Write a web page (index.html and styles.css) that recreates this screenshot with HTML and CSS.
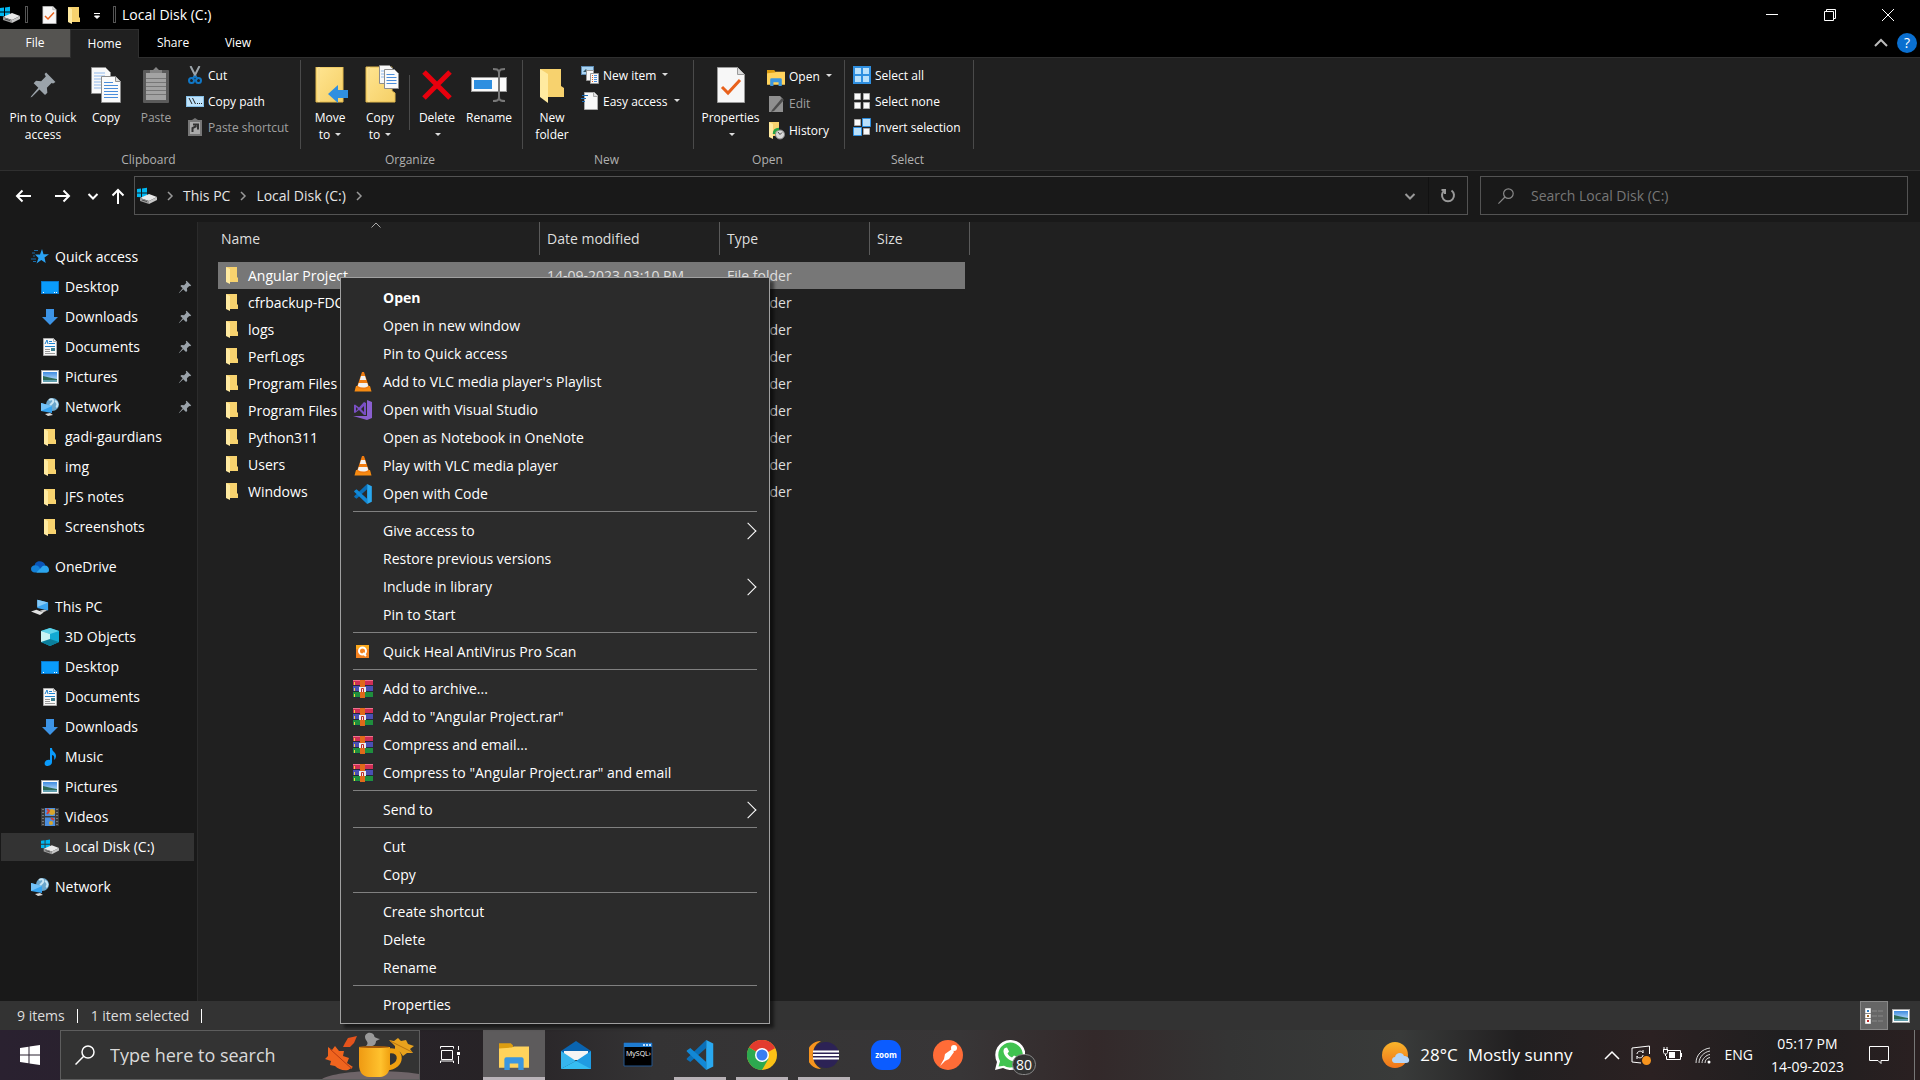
FILE: index.html
```html
<!DOCTYPE html>
<html lang="en">
<head>
    <meta charset="utf-8">
    <title>Local Disk (C:)</title>
    <link rel="stylesheet" href="styles.css">
</head>
<body>
    <!-- icon sprite -->
    <svg class="sprite" aria-hidden="true">
        <defs>
            <linearGradient id="gFolder" x1="0" y1="0" x2="1" y2="1">
                <stop offset="0" stop-color="#ffe591"/><stop offset="1" stop-color="#f5cf66"/>
            </linearGradient>
            <linearGradient id="gCup" x1="0" y1="0" x2="1" y2="0">
                <stop offset="0" stop-color="#ef9a12"/><stop offset=".7" stop-color="#ffc22e"/><stop offset="1" stop-color="#f0a010"/>
            </linearGradient>
            <linearGradient id="gSun" x1="0" y1="0" x2="0" y2="1">
                <stop offset="0" stop-color="#f9b52b"/><stop offset="1" stop-color="#f0741a"/>
            </linearGradient>
            <linearGradient id="gSky" x1="0" y1="0" x2="0" y2="1">
                <stop offset="0" stop-color="#3f8be0"/><stop offset="1" stop-color="#d5efff"/>
            </linearGradient>
        </defs>
        <symbol id="folder" viewBox="0 0 18 18">
            <path d="M3 1h11v10l1 1v4H6z" fill="#f7d26e"/>
            <path d="M3 1l4 2v15l-4-2z" fill="#ffeaa0"/>
        </symbol>
        <symbol id="disk" viewBox="0 0 20 18">
            <path d="M0 2l4-.5v4H0zM5 1.400l5-.6v4.700H5zM0 6.500h4v3.800L0 10zM5 6.500h5v4.400l-5-.4z" fill="#00b7f1"/>
            <path d="M3 11l9-4 8 3-8 4z" fill="#e9e9e9"/>
            <path d="M3 11l9 3v3l-9-3z" fill="#9b9b9b"/>
            <path d="M12 14l8-4v3l-8 4z" fill="#c6c6c6"/>
            <path d="M5 13l5 1.500" stroke="#4b4b4b"/>
        </symbol>
        <symbol id="check" viewBox="0 0 28 36">
            <path d="M.5.500h20l7 7v28H.5z" fill="#f7f7f7" stroke="#9a9a9a"/>
            <path d="M20.500.500v7h7" fill="#dcdcdc" stroke="#9a9a9a"/>
            <path d="M5 20l6 6L23 13" fill="none" stroke="#e8611c" stroke-width="3"/>
        </symbol>
        <symbol id="pin" viewBox="0 0 18 18">
            <path d="M11 1l6 6-1.500 1-1-.3-3 3 .3 3.300-1.500 1.500-3.600-3.600L2 16.500l-1 .5.500-1L6 10.700 3 7.800 4.500 6.300l3.300.3 3-3L10 2z" fill="#9ba3aa"/>
        </symbol>
        <symbol id="copy" viewBox="0 0 30 36">
            <path d="M.5.500h14l5 5v21H.5z" fill="#f8f8f8" stroke="#8d8d8d"/>
            <path d="M3 6h11M3 9h11M3 12h10M3 15h10M3 18h10M3 21h10" stroke="#8fb8ec"/>
            <path d="M10.500 9.500h14l5 5v21h-19z" fill="#fafafa" stroke="#8d8d8d"/>
            <path d="M24.500 9.500v5h5" fill="#ddd" stroke="#8d8d8d"/>
            <path d="M13 15.500h9M13 18.500h14M13 21.500h14M13 24.500h14M13 27.500h14M13 30.500h14" stroke="#4a8ddb"/>
        </symbol>
        <symbol id="paste" viewBox="0 0 26 36">
            <rect y="3" width="26" height="33" rx="1" fill="#5a5a5a"/>
            <rect x="3" y="6" width="20" height="27" fill="#a3a3a3"/>
            <path d="M7 6V3h3l3-3 3 3h3v3z" fill="#858585"/>
            <path d="M3 11.500h20M3 15.500h20M3 19.500h20M3 23.500h20M3 27.500h20" stroke="#777"/>
        </symbol>
        <symbol id="cut" viewBox="0 0 18 18">
            <path d="M4.500 0l5.500 11M13.500 0L8 11" stroke="#9da5ab" stroke-width="2"/>
            <path d="M9 10l-3 3M9 10l3 3" stroke="#1177c5" stroke-width="2"/>
            <circle cx="5.500" cy="14.500" r="2.500" fill="none" stroke="#1177c5" stroke-width="2"/>
            <circle cx="12.500" cy="14.500" r="2.500" fill="none" stroke="#1177c5" stroke-width="2"/>
        </symbol>
        <symbol id="path" viewBox="0 0 18 18">
            <rect x=".5" y="4.500" width="17" height="10" fill="#bfe3fb" stroke="#86bfe6"/>
            <path d="M3 6l3 6M6.500 6l3 6M11 11.500h1M13 11.500h1M15 11.500h1" stroke="#222"/>
        </symbol>
        <symbol id="shortcut" viewBox="0 0 18 18">
            <path d="M2 2h4l3-2 3 2h4v16H2z" fill="#777"/>
            <rect x="4" y="4" width="10" height="12" fill="#aaa"/>
            <path d="M6.500 14v-4l4-2M7 6.500h5v5" fill="none" stroke="#333" stroke-width="2"/>
        </symbol>
        <symbol id="moveto" viewBox="-2 0 36 36">
            <path d="M2 0h27v35H2z" fill="url(#gFolder)" stroke="#e2b94f"/>
            <path d="M5 0v35" stroke="#f6dc8d" stroke-width="2"/>
            <path d="M14 27l10-9v5h10v8H24v5z" fill="#2f8fe0"/>
        </symbol>
        <symbol id="copyto" viewBox="-3 2 36 36" overflow="visible">
            <path d="M1 2h26v24l3 2v9H1z" fill="url(#gFolder)" stroke="#e2b94f"/>
            <path d="M4 2v35" stroke="#f6dc8d" stroke-width="2"/>
            <path d="M14.500.500h10l4 4v14h-14z" fill="#f8f8f8" stroke="#8d8d8d"/>
            <path d="M16 6h8M16 9h8M16 12h8" stroke="#8fb8ec"/>
            <path d="M19.500 4.500h10l4 4v15h-14z" fill="#fafafa" stroke="#8d8d8d"/>
            <path d="M21.500 9.500h8M21.500 12.500h10M21.500 15.500h10M21.500 18.500h10" stroke="#4a8ddb"/>
        </symbol>
        <symbol id="delete" viewBox="0 0 36 36">
            <path d="M5 5l26 26M31 5L5 31" stroke="#e8000d" stroke-width="5"/>
        </symbol>
        <symbol id="rename" viewBox="0 0 36 36">
            <rect x=".5" y="10.500" width="35" height="14" fill="#fafafa" stroke="#999"/>
            <rect x="3" y="13" width="18" height="9" fill="#2f8fe0"/>
            <path d="M22 2c3 0 6 0 6 4v24c0 4-3 4-6 4M34 2c-3 0-6 0-6 4v24c0 4 3 4 6 4" fill="none" stroke="#777" stroke-width="2"/>
        </symbol>
        <symbol id="newfolder" viewBox="0 0 26 36">
            <path d="M1 2h21v17l3 2v9H6z" fill="#f7d26e"/>
            <path d="M1 2l8 5v29l-8-6z" fill="#ffeaa0"/>
        </symbol>
        <symbol id="newitem" viewBox="0 0 18 18">
            <rect x=".5" y=".5" width="12" height="8" fill="#a9d4f3" stroke="#5f8cb4"/>
            <path d="M2 6l3-3 2 3z" fill="#356"/>
            <path d="M5.500 4.500h7v10h-7z" fill="#f8f8f8" stroke="#999"/>
            <path d="M9.500 7.500h8v10h-8z" fill="#f8f8f8" stroke="#999"/>
            <path d="M13 9.500h3M13 11.500h3M13 13.500h3M13 15.500h3" stroke="#4a8ddb"/>
            <path d="M11 9.500h1M11 11.500h1M11 13.500h1M11 15.500h1" stroke="#e8611c"/>
        </symbol>
        <symbol id="easy" viewBox="0 0 18 18">
            <path d="M3.500.500h10l3 3v14h-13z" fill="#f8f8f8" stroke="#aaa"/>
            <path d="M12.500.500v4h4" fill="#ddd" stroke="#aaa"/>
            <path d="M1 3.500h6M0 6.500h5M1 9.500h3" stroke="#1a6bb5"/>
        </symbol>
        <symbol id="explorer" viewBox="0 0 28 28">
            <path d="M0 3h11l2 2v4H0z" fill="#dc9d10"/>
            <path d="M0 8l12-1 2-1h14v20H0z" fill="#ffd35c"/>
            <path d="M5 28V18a2 2 0 0 1 2-2h14a2 2 0 0 1 2 2v10h-5v-6h-8v6z" fill="#3a96e0"/>
        </symbol>
        <symbol id="edit" viewBox="0 0 18 18">
            <path d="M2 1h11l3 3v13H2z" fill="#8f8f8f"/>
            <path d="M5 15L15 3l2 2L7 16l-3 1z" fill="#4d4d4d"/>
        </symbol>
        <symbol id="history" viewBox="0 0 18 18">
            <path d="M2 0h10v14H5z" fill="#f7d26e"/>
            <path d="M2 0l4 2v15l-4-2z" fill="#ffeaa0"/>
            <circle cx="13" cy="12.500" r="4.500" fill="#d9d9d9" stroke="#888"/>
            <path d="M11 10l2 2.500 2-2" fill="none" stroke="#444"/>
            <path d="M12 7c-4 0-5 3-5 5" fill="none" stroke="#27a346" stroke-width="2.500"/>
        </symbol>
        <symbol id="selall" viewBox="0 0 18 18">
            <path d="M0 0h18v18H0z" fill="#2f8fe0"/>
            <path d="M2 2h6v6H2zM10 2h6v6h-6zM2 10h6v6H2zM10 10h6v6h-6z" fill="#b9e0fb"/>
        </symbol>
        <symbol id="selnone" viewBox="0 0 18 18">
            <path d="M1.500 1.500h6v6h-6zM10.500 1.500h6v6h-6zM1.500 10.500h6v6h-6zM10.500 10.500h6v6h-6z" fill="#fafafa" stroke="#aaa"/>
        </symbol>
        <symbol id="selinv" viewBox="0 0 18 18">
            <path d="M1.500 1.500h6v6h-6zM10.500 10.500h6v6h-6z" fill="#fafafa" stroke="#aaa"/>
            <path d="M9.500.500h8v8h-8zM.5 9.500h8v8h-8z" fill="#b9e0fb" stroke="#2f8fe0"/>
        </symbol>
        <symbol id="star" viewBox="0 0 18 18">
            <path d="M11 1l1.500 5.200H18l-4.500 3.300 1.200 5.500-4.400-3L5.500 15.500l2-5.500L4 6.500h5z" fill="#2aa3f4"/>
            <path d="M3 2.500h4M1 5h3M2 8h2M0 11h5M2 13.500h3" stroke="#1a6ba8"/>
        </symbol>
        <symbol id="desktop" viewBox="0 0 18 18">
            <rect x=".5" y="3.500" width="17" height="12" fill="#0a9bfb" stroke="#0b76c8"/>
            <path d="M2 14.500h1M13 14.500h1M15 14.500h1" stroke="#fff"/>
        </symbol>
        <symbol id="down" viewBox="0 0 18 18">
            <path d="M5 1h8v8h4l-8 8-8-8h4z" fill="#3d94e6"/>
        </symbol>
        <symbol id="doc" viewBox="0 0 18 18">
            <path d="M2.500.500h10l3 3v14h-13z" fill="#f8f8f8" stroke="#aaa"/>
            <path d="M12.500.500v3h3" fill="none" stroke="#aaa"/>
            <path d="M4 6l2-4 1 4M8 3.500h3M8 5.500h6M4 8.500h10" stroke="#1c82cf" fill="none"/>
            <path d="M4 11.500h5M4 13.500h5M4 15.500h10" stroke="#999"/>
            <path d="M10 10h4v3h-4z" fill="#3b7f8f"/>
        </symbol>
        <symbol id="pic" viewBox="0 0 18 18">
            <rect x=".5" y="2.500" width="17" height="13" fill="#fff" stroke="#a3a3a3"/>
            <rect x="2" y="4" width="14" height="10" fill="url(#gSky)"/>
            <path d="M2 8c4 1 8 2 14 3v1H2z" fill="#2f6b57"/>
            <path d="M2 12h14v2H2z" fill="#5f9fae"/>
        </symbol>
        <symbol id="net" viewBox="0 0 18 18">
            <circle cx="11.500" cy="6.500" r="6.500" fill="#6ba6cc"/>
            <path d="M8 2c3-2 5 0 4 2S8 7 8 10M14 3c3 1 3 5 1 6" fill="none" stroke="#c9e6f5" stroke-width="2"/>
            <path d="M0 5l11 3v7L0 13z" fill="#35a3f0"/>
            <path d="M0 5l11 3-11 5z" fill="#73c2f8"/>
            <path d="M4 16l5-1 3 2-5 1z" fill="#d8d8d8"/>
        </symbol>
        <symbol id="cloud" viewBox="0 0 20 18">
            <path d="M4 8c0-7 10-7 12-1l-5 4z" fill="#0a55b8"/>
            <path d="M0 11c0-4 5-5 8-3l5 6-9 1c-2 0-4-1-4-4z" fill="#1481d8"/>
            <path d="M6 15l7-7c3-2 7 0 7 4 0 3-2 3.500-4 3.500H4z" fill="#2ba5ee"/>
        </symbol>
        <symbol id="pc" viewBox="0 0 20 18">
            <path d="M7 1l12 3v9L7 10z" fill="#3aa5f2"/>
            <path d="M7 1l12 3-12 5z" fill="#84caf8"/>
            <path d="M10 13l5-1 3 1-5 2z" fill="#ccc"/>
            <path d="M0 14l6-2 8 3-4 3z" fill="#e2e2e2"/>
        </symbol>
        <symbol id="cube" viewBox="0 0 18 18">
            <path d="M0 3l9-3 9 3v11l-9 4-9-4z" fill="#12a9d2"/>
            <path d="M0 3l9-3 9 3-9 3z" fill="#5fd2e8"/>
            <path d="M0 3l9 3v8l-9 0z" fill="#c8f3f3"/>
            <path d="M0 14l9-3 9 3-9 4z" fill="#0b7f9c"/>
        </symbol>
        <symbol id="music" viewBox="0 0 18 18">
            <path d="M9 0h2c0 4 4 4 4 8 0 2-1 3-2 4 1-4-1-5-2-5v7c0 3-3 4-5 4s-3-2-2-4 3-2.500 5-2z" fill="#0a9bfb"/>
        </symbol>
        <symbol id="video" viewBox="0 0 18 18">
            <path d="M0 0h18v18H0z" fill="#3a3a3a"/>
            <path d="M4 0h10v8H4zM4 9.500h10V18H4z" fill="#4c8fe0"/>
            <circle cx="11" cy="4" r="3" fill="#d8a62c"/><circle cx="10" cy="15" r="2" fill="#d8a62c"/>
            <path d="M6 1l2 2-2 3M10 10l3 2" stroke="#d33f33" stroke-width="2" fill="none"/>
            <path d="M2 1v16M16 1v16" stroke="#777" stroke-width="2" stroke-dasharray="1 2"/>
        </symbol>
        <symbol id="vlc" viewBox="0 0 20 20">
            <path d="M3 14h14l1.500 5.500h-17z" fill="#f68b12"/>
            <path d="M9 0h2l5 15c-3 3-9 3-12 0z" fill="#f07c10"/>
            <path d="M8 4h4l1.200 4H6.800zM5.700 11h8.600l1 3c-3 2-7 2-10.600 0z" fill="#f2f2f2"/>
        </symbol>
        <symbol id="vs" viewBox="0 0 20 20">
            <path d="M14 0l5 2v16l-5 2-14-4 14 0z" fill="#8a5fcf"/>
            <path d="M1 5l1-.5 4 3L11 2l2 1v12l-2 0-5-5-4 3-1-.5zM3 7v4l2-2zM11 6L8 9l3 3z" fill="#7a4fc4" fill-rule="evenodd"/>
        </symbol>
        <symbol id="vscode" viewBox="0 0 30 34">
            <path d="M22 0l8 4v26l-8 4z" fill="#29a8f0"/>
            <path d="M22 0v9L4 25l-4-3v-1z" fill="#0a6fb8"/>
            <path d="M22 34v-9L4 9 0 12v1z" fill="#1288d6"/>
        </symbol>
        <symbol id="quickheal" viewBox="0 0 20 20">
            <path d="M3 3h13v13H3z" fill="#f58220"/>
            <path d="M3 3h13v4H3z" fill="#fba81c"/>
            <circle cx="9.500" cy="9" r="3.500" fill="none" stroke="#fff" stroke-width="2"/>
            <path d="M10 11l3 3" stroke="#fff" stroke-width="2"/>
        </symbol>
        <symbol id="rar" viewBox="0 0 20 20">
            <path d="M0 1h20v6H0z" fill="#cf2e55"/>
            <path d="M0 7h20v6H0z" fill="#4a4fb4"/>
            <path d="M0 13h20v6H0z" fill="#1f8f3d"/>
            <path d="M0 1.500h20" stroke="#f0728c"/>
            <path d="M0 6.500h20M0 12.500h20M0 18.500h20" stroke="#232a3a"/>
            <path d="M7 1h5v18H7z" fill="#e06a1a"/>
            <path d="M1.500 3v3M1.500 9v3M1.500 15v3" stroke="#f3cf3c"/>
            <path d="M6 8h7v5H6z" fill="#ececec"/>
            <path d="M8.500 13V9.500h2V13" fill="none" stroke="#c02b2b"/>
        </symbol>
        <symbol id="win" viewBox="0 0 20 20">
            <path d="M0 3l8.500-1.200v7.700H0zM9.500 1.600L20 0v9.500H9.500zM0 10.500h8.500v7.700L0 17zM9.500 10.500H20V20L9.500 18.400z" fill="#fff"/>
        </symbol>
        <symbol id="lens" viewBox="0 0 20 20">
            <circle cx="13" cy="7" r="6" fill="none" stroke="currentColor" stroke-width="1.500"/>
            <path d="M8.700 11.300L.5 19.500" stroke="currentColor" stroke-width="1.500"/>
        </symbol>
        <symbol id="chev" viewBox="0 0 10 10">
            <path d="M3 1l4 4-4 4" fill="none" stroke="currentColor" stroke-width="1.500"/>
        </symbol>
        <symbol id="chevdown" viewBox="0 0 12 12">
            <path d="M1.500 4L6 8.500 10.500 4" fill="none" stroke="currentColor" stroke-width="2"/>
        </symbol>
    </svg>

    <header class="titlebar">
        <svg class="disk"><use href="#disk"/></svg>
        <span class="bar"></span>
        <svg class="qa-check"><use href="#check"/></svg>
        <svg class="ico"><use href="#folder"/></svg>
        <svg class="qa-more" viewBox="0 0 8 8"><path d="M1 1.500h6M1.500 4h5L4 6.500z" fill="#fff" stroke="#fff"/></svg>
        <span class="bar"></span>
        <h1>Local Disk (C:)</h1>
        <div class="win-buttons">
            <button aria-label="Minimize"><svg viewBox="0 0 12 12"><path d="M0 5.500h12" stroke="#fff"/></svg></button>
            <button aria-label="Restore"><svg viewBox="0 0 12 12"><path d="M.5 2.500h9v9h-9zM2.500 2V.5h9v9H10" fill="none" stroke="#fff"/></svg></button>
            <button aria-label="Close"><svg viewBox="0 0 12 12"><path d="M0 0l12 12M12 0L0 12" stroke="#fff"/></svg></button>
        </div>
    </header>

    <nav class="tabs">
        <button class="tab file">File</button>
        <button class="tab active">Home</button>
        <button class="tab">Share</button>
        <button class="tab">View</button>
        <button class="collapse" aria-label="Collapse ribbon"><svg viewBox="0 0 14 14"><path d="M1 10l6-6 6 6" fill="none" stroke="#bbb" stroke-width="2"/></svg></button>
        <button class="help" aria-label="Help">?</button>
    </nav>

    <section class="ribbon">
        <div class="group clipboard">
            <div class="group-body">
                <button class="big"><svg><use href="#pin"/></svg>Pin to Quick<br>access</button>
                <button class="big"><svg><use href="#copy"/></svg>Copy</button>
                <button class="big off"><svg><use href="#paste"/></svg>Paste</button>
                <div class="small-col">
                    <button class="small"><svg><use href="#cut"/></svg>Cut</button>
                    <button class="small"><svg><use href="#path"/></svg>Copy path</button>
                    <button class="small off"><svg><use href="#shortcut"/></svg>Paste shortcut</button>
                </div>
            </div>
            <div class="group-name">Clipboard</div>
        </div>
        <div class="group organize">
            <div class="group-body">
                <button class="big"><svg><use href="#moveto"/></svg>Move<br>to <i class="caret"></i></button>
                <button class="big"><svg><use href="#copyto"/></svg>Copy<br>to <i class="caret"></i></button>
                <span class="divider"></span>
                <button class="big"><svg><use href="#delete"/></svg>Delete<br><i class="caret"></i></button>
                <button class="big"><svg><use href="#rename"/></svg>Rename</button>
            </div>
            <div class="group-name">Organize</div>
        </div>
        <div class="group new">
            <div class="group-body">
                <button class="big"><svg><use href="#newfolder"/></svg>New<br>folder</button>
                <div class="small-col">
                    <button class="small"><svg><use href="#newitem"/></svg>New item <i class="caret"></i></button>
                    <button class="small"><svg><use href="#easy"/></svg>Easy access <i class="caret"></i></button>
                </div>
            </div>
            <div class="group-name">New</div>
        </div>
        <div class="group open">
            <div class="group-body">
                <button class="big"><svg><use href="#check"/></svg>Properties<br><i class="caret"></i></button>
                <div class="small-col">
                    <button class="small"><svg><use href="#explorer"/></svg>Open <i class="caret"></i></button>
                    <button class="small off"><svg><use href="#edit"/></svg>Edit</button>
                    <button class="small"><svg><use href="#history"/></svg>History</button>
                </div>
            </div>
            <div class="group-name">Open</div>
        </div>
        <div class="group select">
            <div class="group-body">
                <div class="small-col">
                    <button class="small"><svg><use href="#selall"/></svg>Select all</button>
                    <button class="small"><svg><use href="#selnone"/></svg>Select none</button>
                    <button class="small"><svg><use href="#selinv"/></svg>Invert selection</button>
                </div>
            </div>
            <div class="group-name">Select</div>
        </div>
    </section>

    <div class="addressbar">
        <button class="nav" aria-label="Back"><svg viewBox="0 0 16 16"><path d="M16 8H2M7.500 2.500L2 8l5.500 5.500" fill="none" stroke="#fff" stroke-width="2"/></svg></button>
        <button class="nav" aria-label="Forward"><svg viewBox="0 0 16 16"><path d="M0 8h14M8.500 2.500L14 8l-5.500 5.500" fill="none" stroke="#fff" stroke-width="2"/></svg></button>
        <button class="nav recent" aria-label="Recent locations"><svg><use href="#chevdown"/></svg></button>
        <button class="nav" aria-label="Up"><svg viewBox="0 0 16 16"><path d="M8 16V2M2.500 7.500L8 2l5.500 5.500" fill="none" stroke="#fff" stroke-width="2"/></svg></button>
        <div class="crumbs">
            <svg class="disk"><use href="#disk"/></svg>
            <svg class="sep"><use href="#chev"/></svg>
            <a href="#">This PC</a>
            <svg class="sep"><use href="#chev"/></svg>
            <a href="#">Local Disk (C:)</a>
            <svg class="sep"><use href="#chev"/></svg>
            <button class="history" aria-label="Previous locations"><svg><use href="#chevdown"/></svg></button>
            <button class="refresh" aria-label="Refresh"><svg viewBox="0 0 16 16"><path d="M11.500 2.500a6 6 0 1 1-7 0M1.500 2H5v4" fill="none" stroke="#999" stroke-width="2"/></svg></button>
        </div>
        <label class="search">
            <svg><use href="#lens"/></svg>
            <input type="text" placeholder="Search Local Disk (C:)" aria-label="Search Local Disk (C:)">
        </label>
    </div>

    <main class="explorer">
        <aside class="sidebar">
            <a href="#" class="top"><svg><use href="#star"/></svg>Quick access</a>
            <a href="#"><svg><use href="#desktop"/></svg>Desktop<svg class="pinned"><use href="#pin"/></svg></a>
            <a href="#"><svg><use href="#down"/></svg>Downloads<svg class="pinned"><use href="#pin"/></svg></a>
            <a href="#"><svg><use href="#doc"/></svg>Documents<svg class="pinned"><use href="#pin"/></svg></a>
            <a href="#"><svg><use href="#pic"/></svg>Pictures<svg class="pinned"><use href="#pin"/></svg></a>
            <a href="#"><svg><use href="#net"/></svg>Network<svg class="pinned"><use href="#pin"/></svg></a>
            <a href="#"><svg><use href="#folder"/></svg>gadi-gaurdians</a>
            <a href="#"><svg><use href="#folder"/></svg>img</a>
            <a href="#"><svg><use href="#folder"/></svg>JFS notes</a>
            <a href="#"><svg><use href="#folder"/></svg>Screenshots</a>
            <a href="#" class="top"><svg><use href="#cloud"/></svg>OneDrive</a>
            <a href="#" class="top"><svg><use href="#pc"/></svg>This PC</a>
            <a href="#"><svg><use href="#cube"/></svg>3D Objects</a>
            <a href="#"><svg><use href="#desktop"/></svg>Desktop</a>
            <a href="#"><svg><use href="#doc"/></svg>Documents</a>
            <a href="#"><svg><use href="#down"/></svg>Downloads</a>
            <a href="#"><svg><use href="#music"/></svg>Music</a>
            <a href="#"><svg><use href="#pic"/></svg>Pictures</a>
            <a href="#"><svg><use href="#video"/></svg>Videos</a>
            <a href="#" class="current"><svg><use href="#disk"/></svg>Local Disk (C:)</a>
            <a href="#" class="top"><svg><use href="#net"/></svg>Network</a>
        </aside>

        <div class="files">
            <table>
                <colgroup><col class="c-name"><col class="c-date"><col class="c-type"><col class="c-size"></colgroup>
                <thead>
                    <tr>
                        <th>Name<svg class="sort" viewBox="0 0 10 6"><path d="M.5 5.500L5 1l4.500 4.500" fill="none" stroke="#aaa"/></svg></th>
                        <th>Date modified</th>
                        <th>Type</th>
                        <th>Size</th>
                    </tr>
                </thead>
                <tbody>
                    <tr class="selected"><td><svg><use href="#folder"/></svg>Angular Project</td><td>14-09-2023 03:10 PM</td><td>File folder</td><td></td></tr>
                    <tr><td><svg><use href="#folder"/></svg>cfrbackup-FDC</td><td></td><td>File folder</td><td></td></tr>
                    <tr><td><svg><use href="#folder"/></svg>logs</td><td></td><td>File folder</td><td></td></tr>
                    <tr><td><svg><use href="#folder"/></svg>PerfLogs</td><td></td><td>File folder</td><td></td></tr>
                    <tr><td><svg><use href="#folder"/></svg>Program Files</td><td></td><td>File folder</td><td></td></tr>
                    <tr><td><svg><use href="#folder"/></svg>Program Files (x86)</td><td></td><td>File folder</td><td></td></tr>
                    <tr><td><svg><use href="#folder"/></svg>Python311</td><td></td><td>File folder</td><td></td></tr>
                    <tr><td><svg><use href="#folder"/></svg>Users</td><td></td><td>File folder</td><td></td></tr>
                    <tr><td><svg><use href="#folder"/></svg>Windows</td><td></td><td>File folder</td><td></td></tr>
                </tbody>
            </table>
        </div>
    </main>

    <footer class="statusbar">
        <span>9 items</span>
        <span>1 item selected</span>
        <button class="view on" aria-label="Details view"><svg viewBox="0 0 18 18"><path d="M.5 1.500h5v15h-5z" fill="#fff" stroke="#ddd"/><path d="M2 4h2" stroke="#2d7fc4" stroke-width="2"/><path d="M2 9h2" stroke="#a06a2a" stroke-width="2"/><path d="M2 14h2" stroke="#c02b2b" stroke-width="2"/><path d="M0 6.500h6M0 11.500h6" stroke="#888"/><path d="M7 4h5M13 4h5M7 9h5M13 9h5M7 14h5M13 14h5" stroke="#888"/></svg></button>
        <button class="view" aria-label="Large thumbnails"><svg><use href="#pic"/></svg></button>
    </footer>

    <div class="taskbar">
        <button class="start" aria-label="Start"><svg><use href="#win"/></svg></button>
        <label class="task-search">
            <svg class="lens"><use href="#lens"/></svg>
            <input type="text" placeholder="Type here to search" aria-label="Type here to search">
            <!-- autumn cup -->
            <svg class="cup" viewBox="0 0 100 48">
                <path d="M0 48c12-7 55-11 97-5v5z" fill="#6e6468"/>
                <path d="M6 16l4 3 3-4 4 5 5 0-1 5 6 2-2 5 6 4-5 3c-5 1-10-1-13-4l-5-1 1-4-6-2 3-3z" fill="#f0641e"/>
                <path d="M8 18l22 20" stroke="#b83a10"/>
                <path d="M35 5l-9 2-3 5-2 4 7 0 4-4z" fill="#e5531c"/>
                <path d="M67 9l5 1 4-3 3 3 5-1 2 4 6 2-4 3 3 4-6 0-4 3-3-4-5-1 0-5z" fill="#e8a21d"/>
                <path d="M68 10l22 11" stroke="#b87410"/>
                <path d="M44 15c4-4-1-5-1-9s6-6 9-2c0 3 3 3 6 4l-4 2c0 3-2 5-5 5z" fill="#999"/>
                <path d="M67 20c14-2 14 16-2 17" fill="none" stroke="#f0a010" stroke-width="5"/>
                <path d="M37 16h31v18c0 7-4 12-10 12H47c-6 0-10-5-10-12z" fill="url(#gCup)"/>
                <ellipse cx="52" cy="16" rx="15" ry="1" fill="#a85b08"/>
            </svg>
        </label>
        <button class="app taskview" aria-label="Task view"><svg viewBox="0 0 20 20"><path d="M1.500 5.500h11v9h-11zM.5 3.500V1.500h13v2M.5 18v-2h13v2M18.500 1v4M18.500 11v8" fill="none" stroke="#fff"/><path d="M17 7h3v3h-3z" fill="#fff"/></svg></button>
        <button class="app active" aria-label="File Explorer"><svg><use href="#explorer"/></svg></button>
        <button class="app" aria-label="Mail"><svg viewBox="0 0 30 30"><path d="M0 11L15 1l15 10v5H0z" fill="#0a64b0"/><path d="M3 11h24v9H3z" fill="#f4f4f4"/><path d="M0 11l15 10L0 29z" fill="#36b5ee"/><path d="M30 11v18H0l15-8z" fill="#1f9be2"/><path d="M0 29l15-8 15 8z" fill="#35bdf2"/></svg></button>
        <button class="app" aria-label="MySQL"><svg viewBox="0 0 30 30"><path d="M1 3h28v23H1z" fill="#000" stroke="#24568e"/><path d="M1 3h28v4H1z" fill="#1e7bd0"/><path d="M20 5h2M23 5h2M26 5h2" stroke="#bfe0ff" stroke-width="2"/><text x="3" y="16" class="mysql">MySQL&#8250;</text></svg></button>
        <button class="app running" aria-label="Visual Studio Code"><svg><use href="#vscode"/></svg></button>
        <button class="app running" aria-label="Chrome"><svg viewBox="0 0 30 30"><circle cx="15" cy="15" r="15" fill="#fbc116"/><path d="M15 15L2 7.500a15 15 0 0 1 26 0z" fill="#e33b2e"/><path d="M2 7.500A15 15 0 0 0 15 30l6.500-11.200z" fill="#2da94f"/><path d="M15 8h13.500L21 12z" fill="#e33b2e"/><circle cx="15" cy="15" r="7" fill="#fff"/><circle cx="15" cy="15" r="5.500" fill="#3a7df0"/></svg></button>
        <button class="app running" aria-label="Eclipse"><svg viewBox="0 0 30 30"><path d="M12 1a14 14 0 0 0 0 28A16 16 0 0 1 12 1z" fill="#f7941e"/><circle cx="17" cy="15" r="13" fill="#2c2255"/><path d="M4 11.500h26M4 15h26M4 18.500h26" stroke="#fff" stroke-width="2"/></svg></button>
        <button class="app" aria-label="Zoom"><svg viewBox="0 0 30 30"><rect width="30" height="30" rx="11" fill="#0b5cff"/><text x="15" y="18" class="zoom">zoom</text></svg></button>
        <button class="app" aria-label="Postman"><svg viewBox="0 0 30 30"><circle cx="15" cy="15" r="15" fill="#ff6c37"/><circle cx="21" cy="8" r="3" fill="#fff"/><path d="M19 9l2 3-5 7-4 2-5 5 4-7 1-5z" fill="#fff"/></svg></button>
        <button class="app" aria-label="WhatsApp"><svg viewBox="0 0 30 30"><path d="M15 0a15 15 0 1 1-7 28l-8 2 2-8A15 15 0 0 1 15 0z" fill="#fff"/><path d="M15 2.500a12.500 12.500 0 1 1-6 23.300L3.500 26.500 5 21.300A12.500 12.500 0 0 1 15 2.500z" fill="#41c351"/><path d="M10 8l2-.5 2 4-1.500 2c1 2 2.500 3 4.500 4l2-2 4 2c0 3-2 4-4 4-5-1-10-5-10.500-10 0-2 .5-3 1.500-3.500z" fill="#fff"/></svg><span class="badge">80</span></button>

        <button class="weather"><svg viewBox="0 0 28 28"><circle cx="13" cy="14" r="13" fill="url(#gSun)"/><path d="M13 22c-4 0-4-6 0-6 1-5 8-5 9-1 6 0 7 7 2 7z" fill="#b5d5f7"/></svg><span>28°C</span><span>Mostly sunny</span></button>
        <div class="tray">
            <svg class="up" viewBox="0 0 16 16"><path d="M1 12l7-7 7 7" fill="none" stroke="#fff" stroke-width="1.500"/></svg>
            <svg viewBox="0 0 20 20"><path d="M18.500 9V1L1 3v14l9 1" fill="none" stroke="#fff"/><path d="M6 9c0-3 5-4 6-1V5M12 10c0 3-5 4-6 1v3" fill="none" stroke="#fff"/><circle cx="15.500" cy="15.500" r="4.500" fill="#f7941e"/></svg>
            <svg viewBox="0 0 20 20"><path d="M5 5.500h13.500v9h-14V11M19.500 8v4M1 4.500h5M1.500 5v2.500c0 2 4 2 4 0V5M2 2v2M5 2v2M3.500 9v2" fill="none" stroke="#fff"/><path d="M7 7h6v6H7z" fill="#fff"/></svg>
            <svg viewBox="0 0 20 20"><path d="M3 18C3 10 9 4 17 3M6 18c0-6 5-11 11-12M9 18c0-4 4-8 8-8.500M12 18c0-3 2-5 5-5.500" fill="none" stroke="#ddd"/><circle cx="16" cy="17" r="1.500" fill="#fff"/></svg>
            <span class="lang">ENG</span>
            <span class="clock">05:17 PM<br>14-09-2023</span>
            <svg class="notes" viewBox="0 0 20 20"><path d="M.5 1.500h19v14H12v3l-3-3H.5z" fill="none" stroke="#fff"/></svg>
        </div>
        <button class="show-desktop" aria-label="Show desktop"></button>
    </div>

    <!-- context menu for the selected folder -->
    <div class="menu" role="menu">
        <button class="default">Open</button>
        <button>Open in new window</button>
        <button>Pin to Quick access</button>
        <button><svg><use href="#vlc"/></svg>Add to VLC media player's Playlist</button>
        <button><svg><use href="#vs"/></svg>Open with Visual Studio</button>
        <button>Open as Notebook in OneNote</button>
        <button><svg><use href="#vlc"/></svg>Play with VLC media player</button>
        <button><svg><use href="#vscode"/></svg>Open with Code</button>
        <hr>
        <button class="more">Give access to</button>
        <button>Restore previous versions</button>
        <button class="more">Include in library</button>
        <button>Pin to Start</button>
        <hr>
        <button><svg><use href="#quickheal"/></svg>Quick Heal AntiVirus Pro Scan</button>
        <hr>
        <button><svg><use href="#rar"/></svg>Add to archive...</button>
        <button><svg><use href="#rar"/></svg>Add to "Angular Project.rar"</button>
        <button><svg><use href="#rar"/></svg>Compress and email...</button>
        <button><svg><use href="#rar"/></svg>Compress to "Angular Project.rar" and email</button>
        <hr>
        <button class="more">Send to</button>
        <hr>
        <button>Cut</button>
        <button>Copy</button>
        <hr>
        <button>Create shortcut</button>
        <button>Delete</button>
        <button>Rename</button>
        <hr>
        <button>Properties</button>
    </div>
</body>
</html>
```

FILE: styles.css
```css
* {
    box-sizing: border-box;
}
body {
    margin: 0;
    height: 100vh;
    display: flex;
    flex-direction: column;
    overflow: hidden;
    background: #202020;
    color: #fff;
    font-family: "Open Sans", "Noto Sans", sans-serif;
    font-size: 14px;
    line-height: 20px;
}
button {
    font: inherit;
    color: inherit;
    background: none;
    border: none;
    padding: 0;
    white-space: nowrap;
}
a {
    color: inherit;
    text-decoration: none;
}
input {
    font: inherit;
    color: #fff;
    background: none;
    border: none;
    outline: none;
    padding: 0;
    min-width: 0;
    flex: 1;
}
svg {
    display: block;
    flex: none;
    width: 18px;
    height: 18px;
}
.sprite {
    position: absolute;
    width: 0;
    height: 0;
}

/* title bar */
.titlebar {
    display: flex;
    align-items: center;
    height: 29px;
    flex: none;
    background: #000;
}
.titlebar h1 {
    margin: 0 0 0 6px;
    font-size: 14px;
    font-weight: 400;
}
.disk {
    width: 20px;
}
.bar {
    width: 3px;
    height: 17px;
    margin-left: 5px;
    border: 1px solid #555;
}
.titlebar .qa-check {
    width: 15px;
    margin: 0 8px 0 14px;
}
.qa-more {
    width: 8px;
    height: 8px;
    margin: 2px 7px 0 10px;
}
.win-buttons {
    display: flex;
    margin-left: auto;
    margin-right: 3px;
}
.win-buttons button {
    width: 58px;
    height: 29px;
    display: flex;
    align-items: center;
    justify-content: center;
}
.win-buttons svg {
    width: 12px;
    height: 12px;
}

/* ribbon tabs */
.tabs {
    display: flex;
    flex: none;
    height: 28px;
    background: #000;
    font-size: 12px;
    align-items: center;
}
.tab {
    width: 62px;
    height: 28px;
}
.tab.file {
    width: 70px;
    background: #555451;
}
.tab.active {
    width: 69px;
    height: 29px;
    align-self: flex-start;
    background: #202020;
    border: 1px solid #2f2f2f;
    border-bottom: none;
    position: relative;
}
.tab.active + .tab {
    width: 68px;
}
.collapse {
    margin-left: auto;
    margin-right: 9px;
}
.collapse svg {
    width: 14px;
    height: 14px;
}
.help {
    width: 20px;
    height: 20px;
    margin-right: 3px;
    border-radius: 50%;
    background: #0a6fd0;
    font-size: 14px;
}

/* ribbon */
.ribbon {
    display: flex;
    flex: none;
    height: 114px;
    border-top: 1px solid #2f2f2f;
    border-bottom: 1px solid #2f2f2f;
    font-size: 12px;
    line-height: 17px;
}
.group {
    padding-top: 2px;
}
.group-body {
    display: flex;
    height: 89px;
    border-right: 1px solid #4a4a4a;
}
.group-name {
    padding-right: 4px;
    text-align: center;
    color: #b0b0b0;
    line-height: 21px;
}
.clipboard { width: 301px; }
.organize { width: 222px; }
.new { width: 171px; }
.open { width: 151px; }
.select { width: 129px; }
.big {
    width: 50px;
    padding-top: 7px;
    display: block;
    align-self: flex-start;
}
.big svg {
    width: 36px;
    height: 36px;
    margin: 0 auto 6px;
    overflow: visible;
}
.off {
    color: #a0a0a0;
}
.clipboard .big:nth-child(1) { width: 86px; }
.clipboard .big:nth-child(2) { width: 40px; }
.clipboard .big:nth-child(3) { width: 60px; }
.clipboard .big:nth-child(1) svg {
    width: 28px;
}
.organize .group-body {
    padding-left: 4px;
}
.organize .divider + .big { width: 54px; }
.divider {
    width: 1px;
    height: 55px;
    margin: 15px 0 0 4px;
    background: #4a4a4a;
}
.new .big { width: 58px; }
.open .big { width: 73px; }
.small-col {
    padding-top: 2px;
}
.open .small-col {
    padding-top: 3px;
}
.select .small-col {
    padding-left: 8px;
}
.small {
    display: flex;
    align-items: center;
    gap: 4px;
    height: 26px;
}
.open .small {
    height: 27px;
}
.caret {
    display: inline-block;
    border: 3px solid transparent;
    border-top-color: #ddd;
    border-bottom: none;
    vertical-align: middle;
    margin: 0 0 2px 2px;
}

/* address bar */
.addressbar {
    display: flex;
    flex: none;
    align-items: center;
    height: 51px;
    padding: 0 12px 2px 15px;
    background: #191919;
}
.nav {
    width: 18px;
    margin-right: 22px;
}
.nav svg {
    width: 16px;
    height: 16px;
}
.nav.recent {
    width: 12px;
    margin: 0 11px 0 -8px;
}
.nav.recent svg {
    width: 12px;
    height: 12px;
}
.nav.recent + .nav {
    margin-right: 6px;
}
.crumbs {
    display: flex;
    align-items: center;
    flex: 1;
    height: 39px;
    padding-left: 2px;
    border: 1px solid #535353;
    color: #e5e5e5;
}
.crumbs .sep {
    width: 10px;
    height: 10px;
    margin: 0 8px;
    color: #999;
}
.crumbs .history {
    margin-left: auto;
    padding: 0 12px;
    color: #999;
}
.crumbs .history svg {
    width: 12px;
    height: 12px;
}
.crumbs .refresh {
    height: 37px;
    padding: 0 11px;
    border-left: 1px solid #111;
}
.crumbs .refresh svg {
    width: 16px;
    height: 16px;
}
.search {
    display: flex;
    align-items: center;
    width: 428px;
    height: 39px;
    margin-left: 12px;
    padding-left: 17px;
    border: 1px solid #535353;
    gap: 17px;
    color: #888;
}
.search svg {
    width: 16px;
    height: 16px;
}
.search input::placeholder {
    color: #777;
}

/* explorer body */
.explorer {
    display: flex;
    flex: 1;
    min-height: 0;
}
.sidebar {
    width: 198px;
    padding: 21px 3px 0 1px;
    background: #191919;
    border-right: 1px solid #2b2b2b;
}
.sidebar a {
    display: flex;
    align-items: center;
    gap: 6px;
    height: 28px;
    margin-bottom: 2px;
    padding-left: 40px;
}
.sidebar .top {
    padding-left: 30px;
}
.sidebar a + .top {
    margin-top: 12px;
}
.sidebar .current {
    background: #333;
}
.sidebar .pinned {
    width: 14px;
    height: 14px;
    margin-left: auto;
    margin-right: 2px;
}
.files {
    flex: 1;
    padding-left: 20px;
}
table {
    width: 752px;
    table-layout: fixed;
    border-collapse: separate;
    border-spacing: 0;
}
.c-name { width: 322px; }
.c-date { width: 180px; }
.c-type { width: 150px; }
.c-size { width: 100px; }
th {
    position: relative;
    height: 33px;
    padding: 0 0 0 7px;
    border-right: 1px solid #5a5a5a;
    font-weight: 400;
    text-align: left;
    color: #dedede;
}
th:first-child {
    padding-left: 3px;
}
.sort {
    position: absolute;
    top: 0;
    left: 50%;
    width: 10px;
    height: 6px;
    margin-left: -8px;
}
tbody::before {
    content: "";
    display: block;
    height: 7px;
}
td {
    height: 27px;
    padding: 1px 0 0 7px;
    color: #dedede;
    white-space: nowrap;
}
td:first-child {
    color: #fff;
}
td svg {
    float: left;
    margin: 0 7px 0 -2px;
}
.selected td {
    background: linear-gradient(#777, #777) no-repeat;
}
.selected td:last-child {
    background-size: 95px 100%;
}

/* status bar */
.statusbar {
    display: flex;
    flex: none;
    align-items: center;
    height: 29px;
    padding: 0 6px 0 17px;
    background: #333;
    color: #dedede;
}
.statusbar span {
    padding-right: 12px;
    margin-right: 13px;
    line-height: 14px;
    border-right: 1px solid #fff;
}
.view {
    width: 26px;
    height: 29px;
    padding-left: 4px;
}
.view.on {
    margin-left: auto;
    border: 1px solid #888;
    background: #666;
    width: 28px;
}

/* taskbar */
.taskbar {
    display: flex;
    flex: none;
    height: 50px;
    background: linear-gradient(90deg, #2a2130 0, #272326 26%, #343334 34%, #383637 50%, #33292a 57%, #343434 64%, #393b3a 73%, #211f20 79%, #2b2122 86%, #1f1e1f 93%, #2a2021 100%);
}
.start {
    width: 60px;
}
.start svg {
    width: 20px;
    height: 20px;
    margin: 0 auto;
}
.task-search {
    display: flex;
    align-items: center;
    width: 360px;
    padding-left: 14px;
    gap: 15px;
    border: 1px solid #5d5d5d;
    background: #333;
    font-size: 18px;
}
.task-search .lens {
    width: 20px;
    height: 20px;
}
.task-search input::placeholder {
    color: #dadada;
}
.cup {
    width: 100px;
    height: 48px;
    margin-right: -3px;
}
.app {
    position: relative;
    width: 62px;
    height: 50px;
}
.app svg {
    width: 30px;
    height: 30px;
    margin: 0 auto;
}
.app.taskview svg {
    width: 20px;
    height: 20px;
}
.app.taskview {
    width: 64px;
    margin-right: -1px;
    padding-right: 4px;
}
.app.active {
    background: #5d5b5c;
    box-shadow: inset 0 -3px #bab4b9;
}
.app.running::after {
    content: "";
    position: absolute;
    left: 5px;
    right: 5px;
    bottom: 0;
    height: 3px;
    background: #b7b1b6;
}
.mysql {
    font-size: 7px;
    fill: #fff;
}
.zoom {
    font-size: 8px;
    font-weight: 700;
    fill: #fff;
    text-anchor: middle;
}
.badge {
    position: absolute;
    left: 33px;
    top: 24px;
    width: 24px;
    height: 21px;
    border: 1px solid #888;
    border-radius: 11px;
    background: #333;
    line-height: 20px;
    text-align: center;
}
.weather {
    display: flex;
    align-items: center;
    gap: 10px;
    margin-left: auto;
    font-size: 17px;
}
.weather svg {
    width: 28px;
    height: 28px;
}
.tray {
    display: flex;
    align-items: center;
    gap: 11px;
    margin-left: 32px;
}
.tray svg {
    width: 20px;
    height: 20px;
}
.tray .up {
    width: 16px;
    height: 16px;
}
.clock {
    text-align: center;
    line-height: 23px;
    margin-left: 7px;
}
.tray .notes {
    margin-left: 14px;
}
.show-desktop {
    width: 6px;
    margin-left: 25px;
    border-left: 1px solid #777;
}

/* context menu */
.menu {
    position: absolute;
    left: 340px;
    top: 277px;
    width: 430px;
    padding: 5px 12px;
    border: 1px solid #a0a0a0;
    background: #2b2b2b;
    box-shadow: 4px 4px 3px rgba(0, 0, 0, 0.5);
}
.menu button {
    display: flex;
    align-items: center;
    width: 100%;
    height: 28px;
    padding: 1px 0 0 30px;
    position: relative;
}
.menu svg {
    width: 20px;
    height: 20px;
    margin: 0 10px 0 -30px;
}
.menu .default {
    font-weight: 700;
}
.menu .more::after {
    content: "";
    width: 11px;
    height: 11px;
    margin: 0 3px 0 auto;
    border: solid #fff;
    border-width: 1px 1px 0 0;
    transform: rotate(45deg);
}
.menu hr {
    height: 1px;
    margin: 4px 0;
    border: none;
    background: #808080;
}
```
